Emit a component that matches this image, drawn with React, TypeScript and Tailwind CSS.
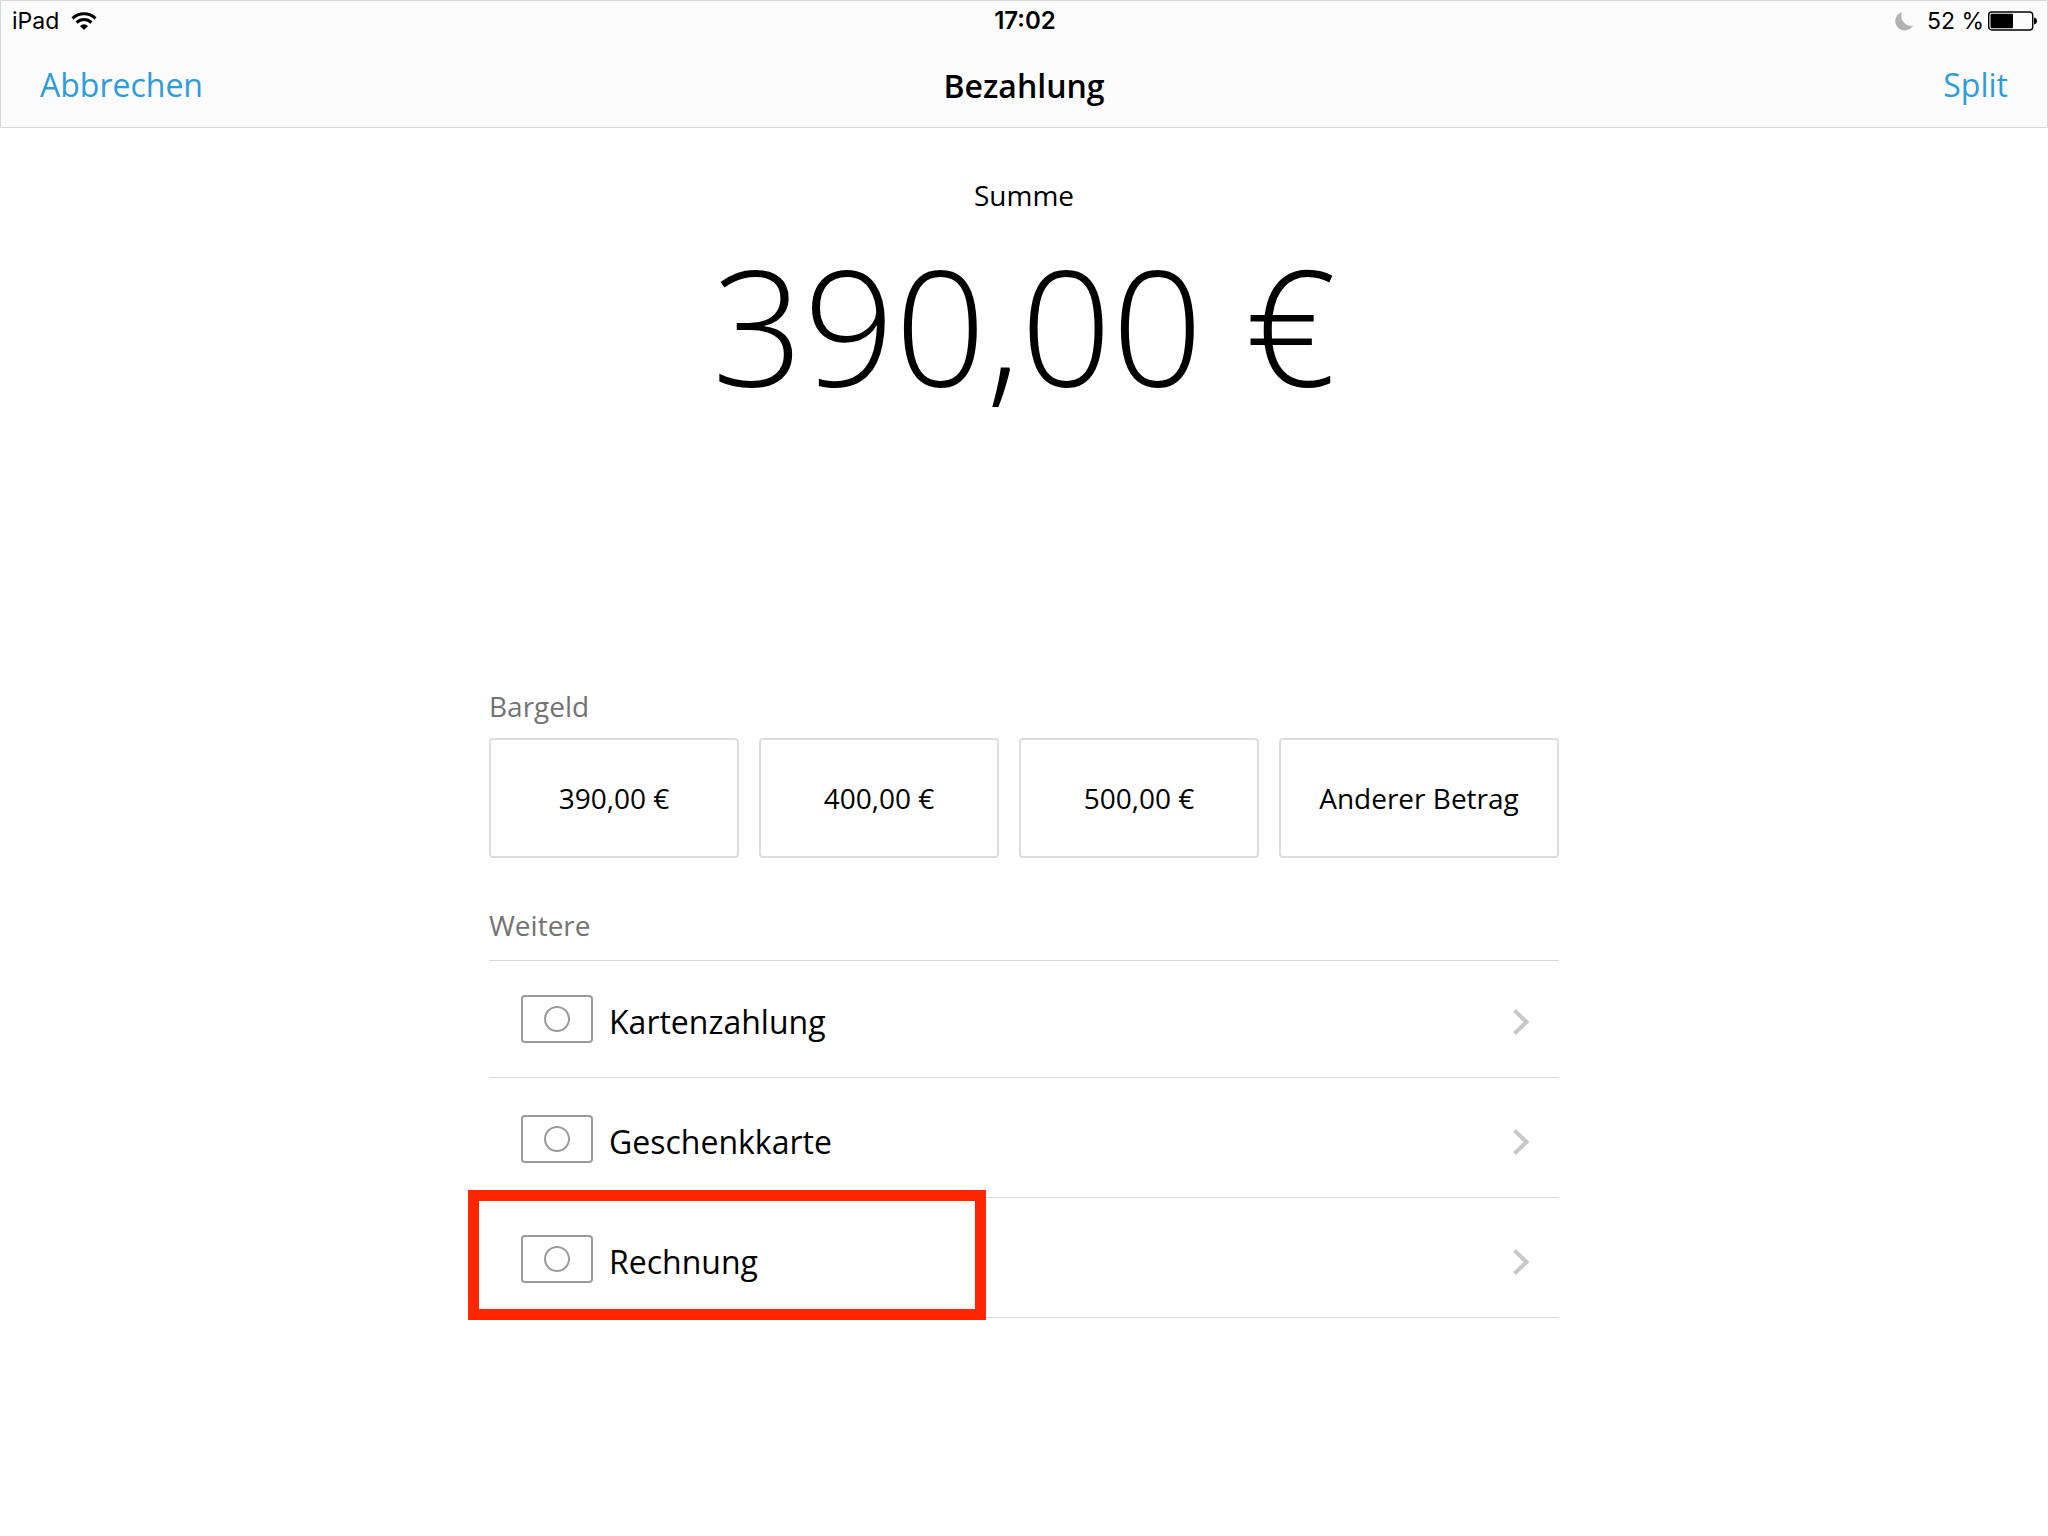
const cashAmounts = ["390,00 €", "400,00 €", "500,00 €", "Anderer Betrag"];

const methods = [
  { name: "Kartenzahlung", highlighted: false },
  { name: "Geschenkkarte", highlighted: false },
  { name: "Rechnung", highlighted: true },
];

const WifiIcon = () => (
  <svg width="26" height="20" viewBox="0 0 26 20" fill="none" stroke="#000" strokeWidth="3">
    <path d="M1.5 7.3a16.5 16.5 0 0 1 23 0" />
    <path d="M5.6 11.6a10.6 10.6 0 0 1 14.8 0" />
    <path d="M13 19l-4-4.1a5.8 5.8 0 0 1 8 0z" fill="#000" stroke="none" />
  </svg>
);

const MoonIcon = () => (
  <svg width="18" height="19" viewBox="0 0 18 19" fill="#b2b2b2">
    <path d="M7.2 0A9.4 9.4 0 1 0 18 13.4 9.6 9.6 0 0 1 7.2 0z" />
  </svg>
);

const BatteryIcon = () => (
  <svg width="50" height="20" viewBox="0 0 50 20">
    <rect x="0.7" y="1" width="44" height="18" rx="3" fill="none" stroke="#000" strokeWidth="1.4" />
    <rect x="2.5" y="2.8" width="22.5" height="14.4" rx="1" />
    <path d="M46 6.5c4 .5 4 6.5 0 7z" />
  </svg>
);

const BanknoteIcon = () => (
  <svg width="72" height="48" viewBox="0 0 72 48" fill="none" stroke="#9b9b9b" strokeWidth="2">
    <rect x="1" y="1" width="70" height="46" rx="3" />
    <circle cx="36" cy="24" r="12" />
  </svg>
);

const ChevronIcon = () => (
  <svg width="18" height="42" viewBox="0 0 18 42" fill="none" stroke="#c7c7cc" strokeWidth="4">
    <path d="M1.5 9.5l12 11.5-12 11.5" />
  </svg>
);

const StatusBar = () => (
  <div className="grid grid-cols-3 items-center h-10 pl-[11px] pr-[9px] font-['Inter',sans-serif] text-[23px] leading-8">
    <div className="flex items-center gap-3">
      <span>iPad</span>
      <WifiIcon />
    </div>
    <div className="text-center text-[24px] leading-8 font-semibold">17:02</div>
    <div className="flex items-center justify-end">
      <MoonIcon />
      <span className="ml-3.5 mr-1">52 %</span>
      <BatteryIcon />
    </div>
  </div>
);

const Header = () => (
  <header className="bg-[#fcfcfc] border border-[#d8d8d8]">
    <StatusBar />
    <nav className="grid grid-cols-3 items-center h-[86px] px-[39px] pt-0.5 text-[32px] leading-[44px]">
      <button className="justify-self-start text-[#2d9cdb]">Abbrechen</button>
      <h1 className="pt-0.5 text-center font-semibold">Bezahlung</h1>
      <button className="justify-self-end text-[#2d9cdb]">Split</button>
    </nav>
  </header>
);

const App = () => {
  return (
    <div className="min-h-screen bg-white text-black font-['Open_Sans',sans-serif]">
      <Header />
      <main className="pt-[47px]">
        <section className="text-center">
          <h2 className="text-[28px] leading-10">Summe</h2>
          <p className="mt-[9px] text-[160px] leading-[200px] font-light">390,00 €</p>
        </section>

        <div className="w-full max-w-[1070px] mx-auto mt-[262px]">
          <section>
            <h3 className="text-[28px] leading-10 text-[#737373]">Bargeld</h3>
            <div className="grid grid-cols-[25fr_24fr_24fr_28fr] gap-5 mt-3">
              {cashAmounts.map((amount) => (
                <button
                  key={amount}
                  className="h-[120px] border-2 border-[#dcdcdc] rounded text-[28px] leading-10"
                >
                  {amount}
                </button>
              ))}
            </div>
          </section>

          <section className="mt-[47px]">
            <h3 className="text-[28px] leading-10 text-[#737373]">Weitere</h3>
            <ul className="mt-[15px] border-t border-[#d8d8d8]">
              {methods.map(({ name, highlighted }) => (
                <li key={name} className="relative h-[120px] first:h-[117px] border-b border-[#d8d8d8]">
                  <button className="flex items-end w-full h-full pl-8 pr-7 pb-[34px] text-left text-[32px] leading-[42px]">
                    <BanknoteIcon />
                    <span className="flex-1 ml-4">{name}</span>
                    <ChevronIcon />
                  </button>
                  {highlighted && (
                    <div className="absolute -left-[21px] -top-2 w-[518px] h-[130px] border-[11px] border-[#ff2600] pointer-events-none" />
                  )}
                </li>
              ))}
            </ul>
          </section>
        </div>
      </main>
    </div>
  );
};

export default App;
